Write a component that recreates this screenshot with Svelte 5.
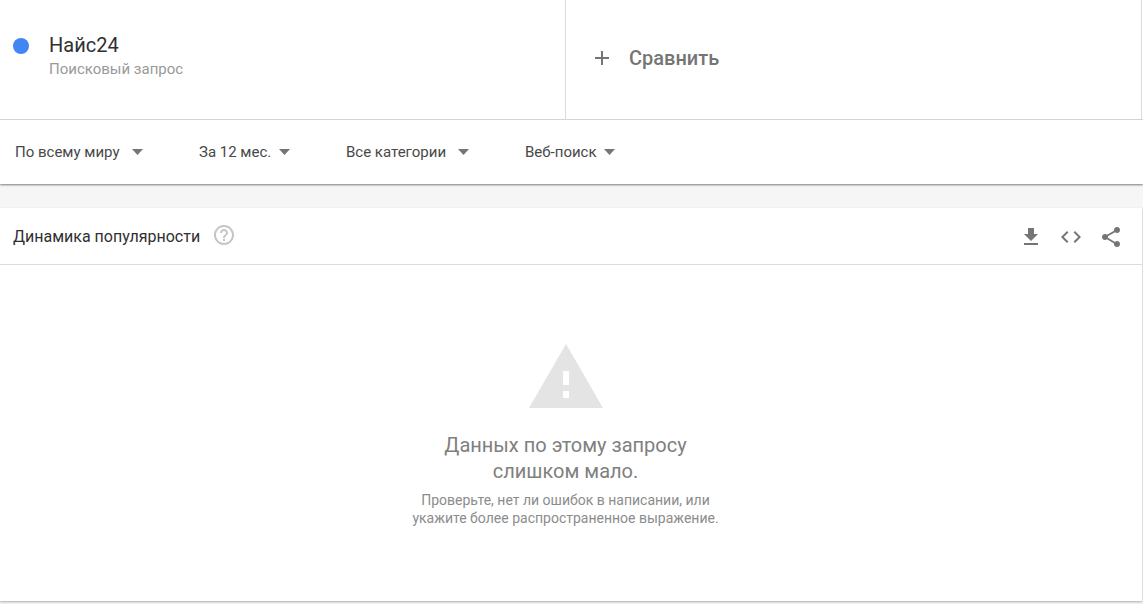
<script lang="ts">
  interface Filter {
    id: string;
    label: string;
    options: string[];
    width: number;
  }

  const filters: Filter[] = [
    { id: "geo", label: "Регион", options: ["По всему миру", "Россия"], width: 128 },
    { id: "time", label: "Период", options: ["За 12 мес.", "За 5 лет"], width: 91 },
    { id: "category", label: "Категория", options: ["Все категории", "Новости"], width: 123 },
    { id: "source", label: "Тип поиска", options: ["Веб-поиск", "Картинки"], width: 90 },
  ];

  const actions = [
    { label: "Скачать", path: "M19 9h-4V3H9v6H5l7 7 7-7zM5 18v2h14v-2H5z" },
    { label: "Встроить", path: "M9.4 16.6L4.8 12l4.6-4.6L8 6l-6 6 6 6 1.4-1.4zm5.2 0l4.6-4.6-4.6-4.6L16 6l6 6-6 6-1.4-1.4z" },
    { label: "Поделиться", path: "M18 16.1c-.8 0-1.4.3-2 .8l-7.1-4.2c.1-.2.1-.5.1-.7s0-.5-.1-.7L16 7.2c.5.5 1.2.8 2 .8 1.7 0 3-1.3 3-3s-1.3-3-3-3-3 1.3-3 3c0 .2 0 .5.1.7L8 9.8c-.5-.5-1.2-.8-2-.8-1.7 0-3 1.3-3 3s1.3 3 3 3c.8 0 1.5-.3 2-.8l7.1 4.2c-.1.2-.1.4-.1.6 0 1.7 1.3 3 3 3s3-1.3 3-3-1.3-2.9-3-2.9z" },
  ];

  let values: Record<string, string> = $state(
    Object.fromEntries(filters.map((f) => [f.id, f.options[0]]))
  );
</script>

<main class="explore">
  <header class="terms">
    <div class="term">
      <span class="dot"></span>
      <div>
        <div class="term-name">Найс24</div>
        <div class="term-type">Поисковый запрос</div>
      </div>
    </div>
    <button class="compare" type="button">
      <svg width="24" height="24" viewBox="0 0 24 24" fill="none" stroke="currentColor" stroke-width="2"><path d="M12 5v14M5 12h14" /></svg>
      Сравнить
    </button>
  </header>

  <div class="filters">
    {#each filters as f}
      <div class="filter" style="width: {f.width}px">
        <select aria-label={f.label} bind:value={values[f.id]}>
          {#each f.options as option}
            <option value={option}>{option}</option>
          {/each}
        </select>
        <svg class="arrow" width="11" height="6" viewBox="0 0 11 6" fill="currentColor"><path d="M0 0h11L5.5 6z" /></svg>
      </div>
    {/each}
  </div>

  <section class="card">
    <div class="card-header">
      <h2>Динамика популярности</h2>
      <button class="icon-btn help" type="button" aria-label="Справка">
        <svg width="24" height="24" viewBox="0 0 24 24" fill="currentColor"><path d="M11 18h2v-2h-2v2zm1-16C6.48 2 2 6.48 2 12s4.48 10 10 10 10-4.480 10-10S17.520 2 12 2zm0 18c-4.410 0-8-3.590-8-8s3.590-8 8-8 8 3.590 8 8-3.590 8-8 8zm0-14c-2.210 0-4 1.790-4 4h2c0-1.100.9-2 2-2s2 .9 2 2c0 2-3 1.750-3 5h2c0-2.250 3-2.500 3-5 0-2.210-1.790-4-4-4z" /></svg>
      </button>
      <div class="actions">
        {#each actions as action}
          <button class="icon-btn" type="button" aria-label={action.label}>
            <svg width="24" height="24" viewBox="0 0 24 24" fill="currentColor"><path d={action.path} /></svg>
          </button>
        {/each}
      </div>
    </div>

    <div class="empty">
      <svg class="warning" width="74" height="64" viewBox="0 0 74 64"><path fill-rule="evenodd" d="M37 0L74 64H0zM34 27v14h6V27zM34 47v7h6v-7z" /></svg>
      <p class="empty-title">Данных по этому запросу<br />слишком мало.</p>
      <p class="empty-text">Проверьте, нет ли ошибок в написании, или<br />укажите более распространенное выражение.</p>
    </div>
  </section>
</main>

<style>
  :global(body) {
    background: #f6f6f6;
  }

  .explore {
    font-family: Roboto, "Noto Sans", sans-serif;
    color: #303030;
    padding-bottom: 3px;
  }

  button,
  select {
    font-family: inherit;
    background: none;
    border: 0;
    margin: 0;
    padding: 0;
    cursor: pointer;
  }

  .terms {
    display: grid;
    grid-template-columns: 566px 1fr;
    height: 119px;
    background: #fff;
    border-bottom: 1px solid #dcdcdc;
    padding-right: 1px;
  }

  .term {
    display: flex;
    align-items: flex-start;
    gap: 20px;
    padding: 33px 13px 0;
    border-right: 1px solid #dcdcdc;
  }

  .dot {
    width: 16px;
    height: 16px;
    margin-top: 5px;
    border-radius: 50%;
    background: #4285f4;
  }

  .term-name {
    font-size: 20px;
    line-height: 24px;
  }

  .term-type {
    font-size: 15px;
    line-height: 24px;
    color: #999;
  }

  .compare {
    display: flex;
    align-items: center;
    gap: 15px;
    padding: 0 24px 4px;
    border-right: 1px solid #dcdcdc;
    font-size: 20px;
    font-weight: 500;
    color: #757575;
  }

  .filters {
    display: flex;
    align-items: center;
    gap: 56px;
    height: 64px;
    padding: 0 15px;
    background: #fff;
    box-shadow: 0 1px 2px rgba(0, 0, 0, 0.5);
  }

  .filter {
    display: flex;
    align-items: center;
    color: #757575;
  }

  .filter select {
    flex: 1;
    min-width: 0;
    appearance: none;
    font-size: 15px;
    line-height: 24px;
    color: #484848;
  }

  .arrow {
    flex-shrink: 0;
    pointer-events: none;
  }

  .card {
    margin: 24px 1px 0 0;
    background: #fff;
    box-shadow: 0 1px 2px rgba(0, 0, 0, 0.3);
  }

  .card-header {
    display: flex;
    align-items: center;
    height: 54px;
    padding: 2px 19px 0 13px;
    border-bottom: 1px solid #dcdcdc;
  }

  h2 {
    margin: 0;
    font-size: 16px;
    font-weight: 400;
    line-height: 24px;
  }

  .icon-btn {
    display: flex;
    color: #757575;
  }

  .help {
    margin: 0 0 4px 12px;
    color: #c4c4c4;
  }

  .actions {
    display: flex;
    gap: 16px;
    margin-left: auto;
  }

  .empty {
    display: flex;
    flex-direction: column;
    align-items: center;
    padding: 79px 11px 74px 0;
    text-align: center;
    color: #808080;
  }

  .warning {
    fill: #e4e4e4;
  }

  p {
    margin: 0;
  }

  .empty-title {
    margin-top: 24px;
    font-size: 20px;
    line-height: 26px;
  }

  .empty-text {
    margin-top: 7px;
    font-size: 14px;
    line-height: 18px;
    color: #8c8c8c;
  }
</style>
